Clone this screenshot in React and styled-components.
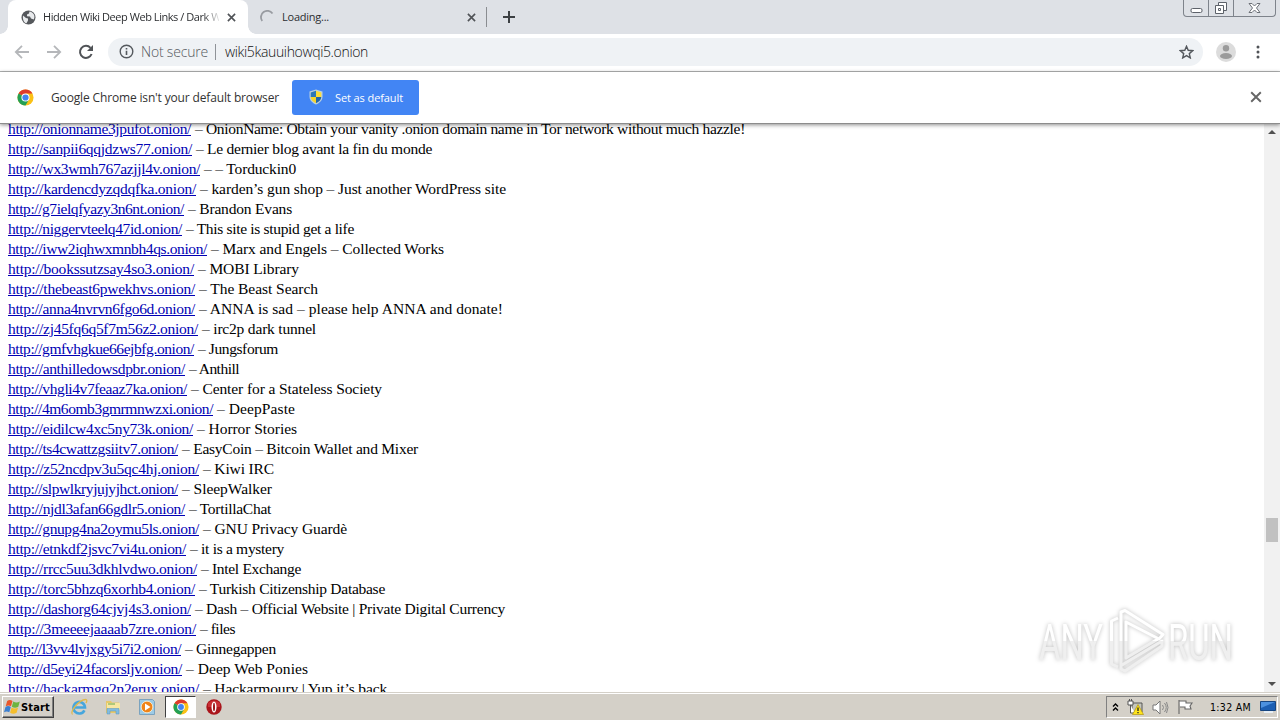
import React, { useLayoutEffect, useRef, useState } from 'react'
import styled, { createGlobalStyle, css } from 'styled-components'

// Data
// url, x where the link ends, description, x where the line ends
const links = [
    ['http://onionname3jpufot.onion/', 191, '– OnionName: Obtain your vanity .onion domain name in Tor network without much hazzle!', 745],
    ['http://sanpii6qqjdzws77.onion/', 192, '– Le dernier blog avant la fin du monde', 432],
    ['http://wx3wmh767azjjl4v.onion/', 200, '– – Torduckin0', 296],
    ['http://kardencdyzqdqfka.onion/', 196, '– karden’s gun shop – Just another WordPress site', 506],
    ['http://g7ielqfyazy3n6nt.onion/', 184, '– Brandon Evans', 292],
    ['http://niggervteelq47id.onion/', 182, '– This site is stupid get a life', 354],
    ['http://iww2iqhwxmnbh4qs.onion/', 207, '– Marx and Engels – Collected Works', 444],
    ['http://bookssutzsay4so3.onion/', 194, '– MOBI Library', 299],
    ['http://thebeast6pwekhvs.onion/', 195, '– The Beast Search', 318],
    ['http://anna4nvrvn6fgo6d.onion/', 195, '– ANNA is sad – please help ANNA and donate!', 503],
    ['http://zj45fq6q5f7m56z2.onion/', 198, '– irc2p dark tunnel', 316],
    ['http://gmfvhgkue66ejbfg.onion/', 194, '– Jungsforum', 278],
    ['http://anthilledowsdpbr.onion/', 185, '– Anthill', 239],
    ['http://vhgli4v7feaaz7ka.onion/', 187, '– Center for a Stateless Society', 382],
    ['http://4m6omb3gmrmnwzxi.onion/', 213, '– DeepPaste', 295],
    ['http://eidilcw4xc5ny73k.onion/', 193, '– Horror Stories', 297],
    ['http://ts4cwattzgsiitv7.onion/', 178, '– EasyCoin – Bitcoin Wallet and Mixer', 418],
    ['http://z52ncdpv3u5qc4hj.onion/', 199, '– Kiwi IRC', 274],
    ['http://slpwlkryjujyjhct.onion/', 178, '– SleepWalker', 272],
    ['http://njdl3afan66gdlr5.onion/', 185, '– TortillaChat', 271],
    ['http://gnupg4na2oymu5ls.onion/', 199, '– GNU Privacy Guardè', 347],
    ['http://etnkdf2jsvc7vi4u.onion/', 186, '– it is a mystery', 284],
    ['http://rrcc5uu3dkhlvdwo.onion/', 197, '– Intel Exchange', 301],
    ['http://torc5bhzq6xorhb4.onion/', 195, '– Turkish Citizenship Database', 385],
    ['http://dashorg64cjvj4s3.onion/', 191, '– Dash – Official Website | Private Digital Currency', 505],
    ['http://3meeeejaaaab7zre.onion/', 196, '– files', 235],
    ['http://l3vv4lvjxgy5i7i2.onion/', 181, '– Ginnegappen', 276],
    ['http://d5eyi24facorsljv.onion/', 182, '– Deep Web Ponies', 308],
    ['http://hackarmgq2n2erux.onion/', 199, '– Hackarmoury | Yup it’s back', 387],
]

const GlobalStyle = createGlobalStyle`
    * { box-sizing: border-box; }
    body {
        margin: 0;
        overflow: hidden;
        background: #fff;
        font-family: 'Open Sans', 'Noto Sans', sans-serif;
        font-size: 11px;
        color: #333;
    }
    svg { display: block; flex: none; }
`

// Text that is tracked to take exactly w pixels
const FitBase = styled.span`
    display: block;
    flex: none;
    white-space: pre;
`
const Fit = ({ w, children, ...props }) => {
    const ref = useRef(null)
    const [spacing, setSpacing] = useState(0)
    useLayoutEffect(() => {
        const range = document.createRange()
        range.selectNodeContents(ref.current)
        const natural = range.getBoundingClientRect().width
        setSpacing((w - natural) / children.length)
    }, [])
    return <FitBase ref={ref} style={{ width: w, letterSpacing: spacing }} {...props}>{children}</FitBase>
}

const Screen = styled.div`
    width: 1280px;
    height: 720px;
    display: flex;
    flex-direction: column;
    overflow: hidden;
`

// Tab strip
const TabStrip = styled.div`
    height: 34px;
    flex: none;
    display: flex;
    align-items: flex-start;
    padding-left: 8px;
    background: #dee1e6;
`
const Tab = styled.div`
    position: relative;
    width: ${p => p.$active ? 240 : 238}px;
    height: 34px;
    display: flex;
    align-items: center;
    padding: 0 ${p => p.$active ? 12 : 10}px 0 ${p => p.$active ? 13 : 12}px;
    ${p => p.$active && css`
        background: #fff;
        border-radius: 8px 8px 0 0;
        &::before, &::after {
            content: '';
            position: absolute;
            bottom: 0;
            width: 8px;
            height: 8px;
        }
        &::before {
            left: -8px;
            background: radial-gradient(circle at 0 0, transparent 7.5px, #fff 8px);
        }
        &::after {
            right: -8px;
            background: radial-gradient(circle at 100% 0, transparent 7.5px, #fff 8px);
        }
    `}
`
const TabTitle = styled.div`
    flex: 1;
    overflow: hidden;
    margin: 0 8px 0 7px;
    color: #2c2e31;
    line-height: 16px;
    ${p => p.$fade && css`
        mask-image: linear-gradient(90deg, #000 160px, transparent 178px);
    `}
`
const Divider = styled.div`
    width: 1px;
    height: 20px;
    margin-top: 7px;
    background: #8a8d91;
`
const NewTab = styled.div`
    padding: 11px 0 0 16px;
`
const WindowButtons = styled.div`
    display: flex;
    height: 17px;
    margin: 0 4px 0 auto;
    border: 1px solid #7e838b;
    border-top: 0;
    border-radius: 0 0 4px 4px;
`
const WindowButton = styled.div`
    width: ${p => p.$w}px;
    display: flex;
    justify-content: center;
    & + & { border-left: 1px solid #7e838b; }
`

// Toolbar
const Toolbar = styled.div`
    height: 38px;
    flex: none;
    display: flex;
    align-items: center;
    padding: 0 18px 2px 14px;
    background: #fff;
    border-bottom: 1px solid #b4b6b6;
`
const NavIcons = styled.div`
    display: flex;
    gap: 16px;
    width: 94px;
`
const Omnibox = styled.div`
    width: 1095px;
    height: 28px;
    display: flex;
    align-items: center;
    padding: 0 9px 0 11px;
    border-radius: 14px;
    background: #eff2f5;
    font-size: 14px;
    font-weight: 300;
    line-height: 20px;
`
const Security = styled.div`
    display: flex;
    align-items: center;
    gap: 7px;
    padding-right: 7px;
    color: #54585d;
`
const Separator = styled.div`
    width: 1px;
    height: 16px;
    margin-right: 9px;
    background: #8f9398;
`
const Url = styled.div`
    flex: 1;
    color: #111;
`
const ToolbarEnd = styled.div`
    flex: 1;
    display: flex;
    align-items: center;
    justify-content: space-between;
    padding-left: 13px;
`

// Info bar
const InfoBar = styled.div`
    position: relative;
    z-index: 1;
    height: 52px;
    flex: none;
    display: flex;
    align-items: center;
    padding: 0 18px 0 17px;
    background: #fff;
    border-bottom: 1px solid #8c8c8c;
    box-shadow: 0 1px 4px rgba(0, 0, 0, .45);
`
const InfoText = styled.div`
    margin: 0 13px 0 17px;
    padding-bottom: 1px;
    font-size: 12px;
    color: #333;
`
const DefaultButton = styled.div`
    width: 127px;
    height: 35px;
    display: flex;
    align-items: center;
    gap: 12px;
    padding: 0 0 1px 17px;
    border-radius: 3px;
    background: #4285f4;
    color: #fff;
`
const InfoClose = styled.div`
    margin-left: auto;
    padding-bottom: 1px;
`

// Page
const Page = styled.div`
    position: relative;
    flex: 1;
    min-height: 0;
    display: flex;
    background: #fff;
`
const LinkList = styled.div`
    flex: 1;
    overflow: hidden;
    padding-left: 8px;
    margin-top: -5px;
    font-family: 'Liberation Serif', 'Times New Roman', serif;
    font-size: 15.5px;
    line-height: 20px;
    color: #000;
`
const LinkRow = styled.div`
    display: flex;
    height: 20px;
    gap: 4px;
`
const PageLink = styled(Fit)`
    color: #0000b4;
    text-decoration: underline;
`
const ScrollBar = styled.div`
    width: 16px;
    display: flex;
    flex-direction: column;
    align-items: center;
    justify-content: space-between;
    padding: 6px 0 6px;
    background: #f1f1f1;
`
const Thumb = styled.div`
    width: 12px;
    height: 24px;
    margin-top: 243px;
    background: #c1c1c1;
`
const Watermark = styled.svg`
    position: absolute;
    left: 1030px;
    top: 480px;
    filter: drop-shadow(0 0 2px rgba(0, 0, 0, .26));
`

// Taskbar
const TaskBar = styled.div`
    height: 28px;
    flex: none;
    display: flex;
    align-items: center;
    padding: 2px 2px 0 2px;
    background: #d4d0c8;
    box-shadow: inset 0 1px #d4d0c8, inset 0 2px #fff;
    font-family: 'DejaVu Sans Condensed', sans-serif;
    color: #000;
`
const StartButton = styled.div`
    width: 52px;
    height: 22px;
    display: flex;
    align-items: center;
    gap: 1px;
    padding-left: 1px;
    border: 1px solid;
    border-color: #fff #404040 #404040 #fff;
    box-shadow: inset -1px -1px #808080;
    font-weight: bold;
`
const Launchers = styled.div`
    display: flex;
    margin-left: 8px;
`
const Launcher = styled.div`
    width: ${p => p.$active ? 31 : 34}px;
    height: 22px;
    display: flex;
    align-items: center;
    justify-content: center;
    ${p => p.$active && css`
        margin: 0 1px;
        background: #fff;
        border: 1px solid;
        border-color: #404040 #fff #fff #404040;
    `}
`
const Tray = styled.div`
    width: 172px;
    height: 22px;
    margin-left: auto;
    display: flex;
    align-items: center;
    gap: 8px;
    padding-left: 5px;
    border: 1px solid;
    border-color: #808080 #fff #fff #808080;
`
const Clock = styled(Fit)`
    margin: 0 1px 0 8px;
    font-size: 10.5px;
`

// Icons
const Globe = () => (
    <svg width='15' height='15' viewBox='0 0 15 15'>
        <circle cx='7.5' cy='7.5' r='7' fill='#55585c' />
        <path d='M2 5.5 5 8l2 .5v2l-1.5 2.8C3 12.5 1.5 10 2 5.5ZM8.5 1.5 8 3.5 6 4.5v1.8l3 .2 1 2 2.8 1C14.8 5.5 12 2 8.5 1.5Z' fill='#e9ebed' />
    </svg>
)
const Cross = ({ size = 9, color = '#505357', weight = 1.8 }) => (
    <svg width={size} height={size} viewBox='0 0 10 10'>
        <path d='m1 1 8 8M9 1 1 9' stroke={color} strokeWidth={weight} />
    </svg>
)
const Spinner = () => (
    <svg width='15' height='15' viewBox='0 0 15 15'>
        <path d='M2.2 11A6.2 6.2 0 0 1 12.5 3.5' fill='none' stroke='#989ba1' strokeWidth='1.8' />
    </svg>
)
const Arrow = ({ flip }) => (
    <svg width='16' height='16' viewBox='0 0 16 16'>
        <path d='M15 8H2M8 1.8 1.8 8 8 14.2' fill='none' stroke='#b5b7ba' strokeWidth='1.8' transform={flip ? 'rotate(180 8 8)' : undefined} />
    </svg>
)
const Reload = () => (
    <svg width='16' height='16' viewBox='0 0 16 16'>
        <path d='M13.6 10A6 6 0 1 1 12.5 3.9' fill='none' stroke='#505357' strokeWidth='2' />
        <path d='M15 1v6H9Z' fill='#505357' />
    </svg>
)
const Info = () => (
    <svg width='15' height='15' viewBox='0 0 15 15'>
        <circle cx='7.5' cy='7.5' r='6.3' fill='none' stroke='#55595e' strokeWidth='1.4' />
        <path d='M7.5 6.7v4.4M7.5 4v1.5' stroke='#55595e' strokeWidth='1.6' />
    </svg>
)
const Star = () => (
    <svg width='15' height='14' viewBox='0 0 15 14'>
        <path d='m7.5 1.3 1.7 4 4.4.4-3.3 2.9 1 4.3-3.8-2.3-3.8 2.3 1-4.3L1.4 5.7l4.4-.4Z' fill='none' stroke='#54585d' strokeWidth='1.4' />
    </svg>
)
const Avatar = () => (
    <svg width='20' height='20' viewBox='0 0 20 20'>
        <circle cx='10' cy='10' r='10' fill='#dcdcdc' />
        <circle cx='10' cy='6.2' r='3.2' fill='#9b9b9b' />
        <ellipse cx='10' cy='14' rx='6' ry='3' fill='#9b9b9b' />
    </svg>
)
const Dots = () => (
    <svg width='8' height='14' viewBox='0 0 8 14'>
        {[2, 7, 12].map(y => <circle key={y} cx='4' cy={y} r='1.5' fill='#505357' />)}
    </svg>
)
const ChromeLogo = ({ size }) => (
    <svg width={size} height={size} viewBox='0 0 18 18'>
        <circle cx='9' cy='9' r='8.5' fill='#fbc116' />
        <path d='M9 9 1.64 4.75A8.5 8.5 0 0 1 16.36 4.75H9Z' fill='#de3b2d' />
        <path d='M9 9 1.64 4.75A8.5 8.5 0 0 0 9 17.5L12.7 11Z' fill='#23a055' />
        <circle cx='9' cy='9' r='4.3' fill='#fff' />
        <circle cx='9' cy='9' r='3.3' fill='#4384f0' />
    </svg>
)
const Shield = () => (
    <svg width='14' height='16' viewBox='0 0 14 16'>
        <path d='M7 .5 13.5 2.5v5c0 4-3 6.5-6.5 8C3.5 14 .5 11.5.5 7.5v-5Z' fill='#b9cfdf' />
        <path d='M7 1.8V8H1.7V3.4Z' fill='#2c77b8' />
        <path d='M7 1.8V8h5.3V3.4Z' fill='#fbdc37' />
        <path d='M1.7 8H7v6.2C4 12.7 1.9 11 1.7 8Z' fill='#f6d52b' />
        <path d='M12.3 8H7v6.2c3-1.5 5.1-3.2 5.3-6.2Z' fill='#2466a8' />
    </svg>
)
const Triangle = ({ down }) => (
    <svg width='8' height='4' viewBox='0 0 8 4'>
        <path d={down ? 'M0 0h8L4 4Z' : 'M0 4h8L4 0Z'} fill='#505050' />
    </svg>
)
const WindowsFlag = () => (
    <svg width='16' height='16' viewBox='0 0 16 16'>
        <path d='M3.2 2q2.5-2 5.3 0L7 7.3q-2.5-1.8-5.3 0Z' fill='#e9572b' />
        <path d='M9.3 2.5q3 2 6.5 0L14.3 7.8q-3.3 2-6.5 0Z' fill='#6eb43f' />
        <path d='M1.5 8q2.6-1.8 5.3 0L5.3 13.3q-2.6-1.8-5.3 0Z' fill='#3b7fd0' />
        <path d='M7.6 8.5q3.2 2 6.5 0L12.6 13.8q-3.3 2-6.5 0Z' fill='#f5be2c' />
    </svg>
)
const Explorer = () => (
    <svg width='18' height='18' viewBox='0 0 18 18'>
        <path d='M14.4 12.3A5.8 5.8 0 1 1 15 9.5H5' fill='none' stroke='#46a6dd' strokeWidth='2.6' />
        <path d='M2.5 16.5C-1 14 9 2 15.5 1.5c2 0 1.3 2 .5 3.5' fill='none' stroke='#dfb94c' strokeWidth='1.3' />
    </svg>
)
const Folder = () => (
    <svg width='16' height='16' viewBox='0 0 16 16'>
        <path d='M1 2h5l1 1.5h7V14H1Z' fill='#e7c86a' />
        <path d='M2 4h13v7H2Z' fill='#f8e7a2' />
        <path d='M2 15V9.5h12V15h-3v-3H5v3Z' fill='#83bce0' stroke='#5795bd' strokeWidth='.5' />
        <path d='M3 5h7' stroke='#67aa51' />
    </svg>
)
const MediaPlayer = () => (
    <svg width='16' height='16' viewBox='0 0 16 16'>
        <path d='M.5.5h13l2 2v13H.5Z' fill='#9dcbe6' stroke='#7ba3bf' />
        <circle cx='8' cy='8' r='5.8' fill='#ef8419' stroke='#fff1d5' strokeWidth='.8' />
        <path d='M6 4.5 11.5 8 6 11.5Z' fill='#fff' />
    </svg>
)
const Opera = () => (
    <svg width='16' height='16' viewBox='0 0 16 16'>
        <circle cx='8' cy='8' r='7.7' fill='#aa151b' />
        <path d='M2 4q6-5 12 0v4H2Z' fill='#c92f35' />
        <ellipse cx='8' cy='8' rx='2.5' ry='5.5' fill='#fff' />
        <ellipse cx='8' cy='8' rx='1' ry='4.3' fill='#9c1318' />
    </svg>
)
const Chevrons = () => (
    <svg width='7' height='8' viewBox='0 0 7 8'>
        <path d='m1 3.5 2.5-2.5L6 3.5M1 7.5 3.5 5 6 7.5' fill='none' stroke='#000' strokeWidth='1.4' />
    </svg>
)
const Network = () => (
    <svg width='17' height='16' viewBox='0 0 17 16'>
        <path d='M5 4h10v9H5Z' fill='#c5c6bd' stroke='#555' />
        <path d='M1 2h5v4H1ZM3.5 6v8H8M2.5 0v2M4.5 0v2' fill='#fff' stroke='#555' />
        <path d='m11 5.5 5.5 10h-11Z' fill='#ffe51c' stroke='#aa8a00' strokeWidth='.6' />
        <path d='M11 8.5v3.5M11 13v1.3' stroke='#222' strokeWidth='1.3' />
    </svg>
)
const Speaker = () => (
    <svg width='17' height='15' viewBox='0 0 17 15'>
        <path d='M1 5h3l4-4v13l-4-4H1Z' fill='#fff' stroke='#777' />
        <path d='M10.5 5q2 2.5 0 5M12.5 3q3.5 4.5 0 9M14.5 2q3 5.5 0 11' fill='none' stroke='#888' />
    </svg>
)
const Flag = () => (
    <svg width='17' height='16' viewBox='0 0 17 16'>
        <path d='M2 15V1M2 2h7v2h6l-2 3 1 3H8V8H3' fill='#fff' stroke='#666' strokeWidth='1.1' />
    </svg>
)
const Desktop = () => (
    <svg width='16' height='14' viewBox='0 0 16 14'>
        <path d='M.5 1.5h15v9H.5Z' fill='#1c5fb3' stroke='#174681' />
        <path d='M1 2h14L1 8Z' fill='#4c91df' />
        <path d='M4 12h9' stroke='#e7eef4' strokeWidth='2' />
    </svg>
)

const AnyRun = () => (
    <Watermark width='212' height='78' viewBox='0 0 212 78'>
        <defs>
            <linearGradient id='fade' gradientUnits='userSpaceOnUse' x1='0' y1='0' x2='0' y2='78'>
                <stop offset='.47' stopColor='#fff' />
                <stop offset='.48' stopColor='#efefef' />
            </linearGradient>
        </defs>
        <g fill='url(#fade)' fontFamily='Roboto, sans-serif' fontSize='50' fontWeight='400'>
            <text x='9' y='56' textLength='64' lengthAdjust='spacingAndGlyphs'>ANY</text>
            <text x='138' y='56' textLength='65' lengthAdjust='spacingAndGlyphs'>RUN</text>
        </g>
        <g fill='none' stroke='url(#fade)' strokeWidth='3' strokeLinejoin='round'>
            <path d='M88 14 81.5 17v43l6.5 3' />
            <path d='M91 59V8l4-1.5 38 24-4 4.5L96 18v36l32-19' />
            <path d='M91 59v6l4 2 37-25v-5L92 61' />
        </g>
    </Watermark>
)

const App = () => (
    <Screen>
        <GlobalStyle />
        <TabStrip>
            <Tab $active>
                <Globe />
                <TabTitle $fade><Fit w={178}>Hidden Wiki Deep Web Links / Dark W</Fit></TabTitle>
                <Cross />
            </Tab>
            <Tab>
                <Spinner />
                <TabTitle><Fit w={47}>Loading...</Fit></TabTitle>
                <Cross />
            </Tab>
            <Divider />
            <NewTab>
                <svg width='12' height='12' viewBox='0 0 12 12'><path d='M6 0v12M0 6h12' stroke='#3c4043' strokeWidth='2' /></svg>
            </NewTab>
            <WindowButtons>
                <WindowButton $w={24}>
                    <svg width='13' height='16' viewBox='0 0 13 16'><rect x='1' y='8.5' width='11' height='4' rx='1.5' fill='#fff' stroke='#5d626a' /></svg>
                </WindowButton>
                <WindowButton $w={25}>
                    <svg width='14' height='16' viewBox='0 0 14 16'>
                        <path d='M4.5 2.5h8v8h-8Z' fill='#fff' stroke='#5d626a' />
                        <path d='M1.5 5.5h8v8h-8ZM4.5 8.5h2v2h-2Z' fill='#fff' stroke='#5d626a' />
                    </svg>
                </WindowButton>
                <WindowButton $w={42}>
                    <svg width='13' height='16' viewBox='0 0 13 16'>
                        <path d='M1 3.5h3l2.5 2.5L9 3.5h3L8.5 8l3.5 4.5H9L6.5 10 4 12.5H1L4.5 8Z' fill='#fff' stroke='#6d7178' />
                    </svg>
                </WindowButton>
            </WindowButtons>
        </TabStrip>
        <Toolbar>
            <NavIcons><Arrow /><Arrow flip /><Reload /></NavIcons>
            <Omnibox>
                <Security><Info /><Fit w={67}>Not secure</Fit></Security>
                <Separator />
                <Url><Fit w={143}>wiki5kauuihowqi5.onion</Fit></Url>
                <Star />
            </Omnibox>
            <ToolbarEnd><Avatar /><Dots /></ToolbarEnd>
        </Toolbar>
        <InfoBar>
            <ChromeLogo size={17} />
            <InfoText><Fit w={228}>Google Chrome isn't your default browser</Fit></InfoText>
            <DefaultButton><Shield /><Fit w={68}>Set as default</Fit></DefaultButton>
            <InfoClose><Cross size={12} color='#666' weight={1.6} /></InfoClose>
        </InfoBar>
        <Page>
            <LinkList>
                {links.map(([url, linkEnd, text, textEnd]) => (
                    <LinkRow key={url}>
                        <PageLink w={linkEnd - 8}>{url}</PageLink>
                        <Fit w={textEnd - linkEnd - 4}>{text}</Fit>
                    </LinkRow>
                ))}
            </LinkList>
            <ScrollBar>
                <Triangle />
                <Thumb />
                <Triangle down />
            </ScrollBar>
            <AnyRun />
        </Page>
        <TaskBar>
            <StartButton><WindowsFlag /><Fit w={29}>Start</Fit></StartButton>
            <Launchers>
                <Launcher><Explorer /></Launcher>
                <Launcher><Folder /></Launcher>
                <Launcher><MediaPlayer /></Launcher>
                <Launcher $active><ChromeLogo size={16} /></Launcher>
                <Launcher><Opera /></Launcher>
            </Launchers>
            <Tray>
                <Chevrons />
                <Network />
                <Speaker />
                <Flag />
                <Clock w={41}>1:32 AM</Clock>
                <Desktop />
            </Tray>
        </TaskBar>
    </Screen>
)

export default App
